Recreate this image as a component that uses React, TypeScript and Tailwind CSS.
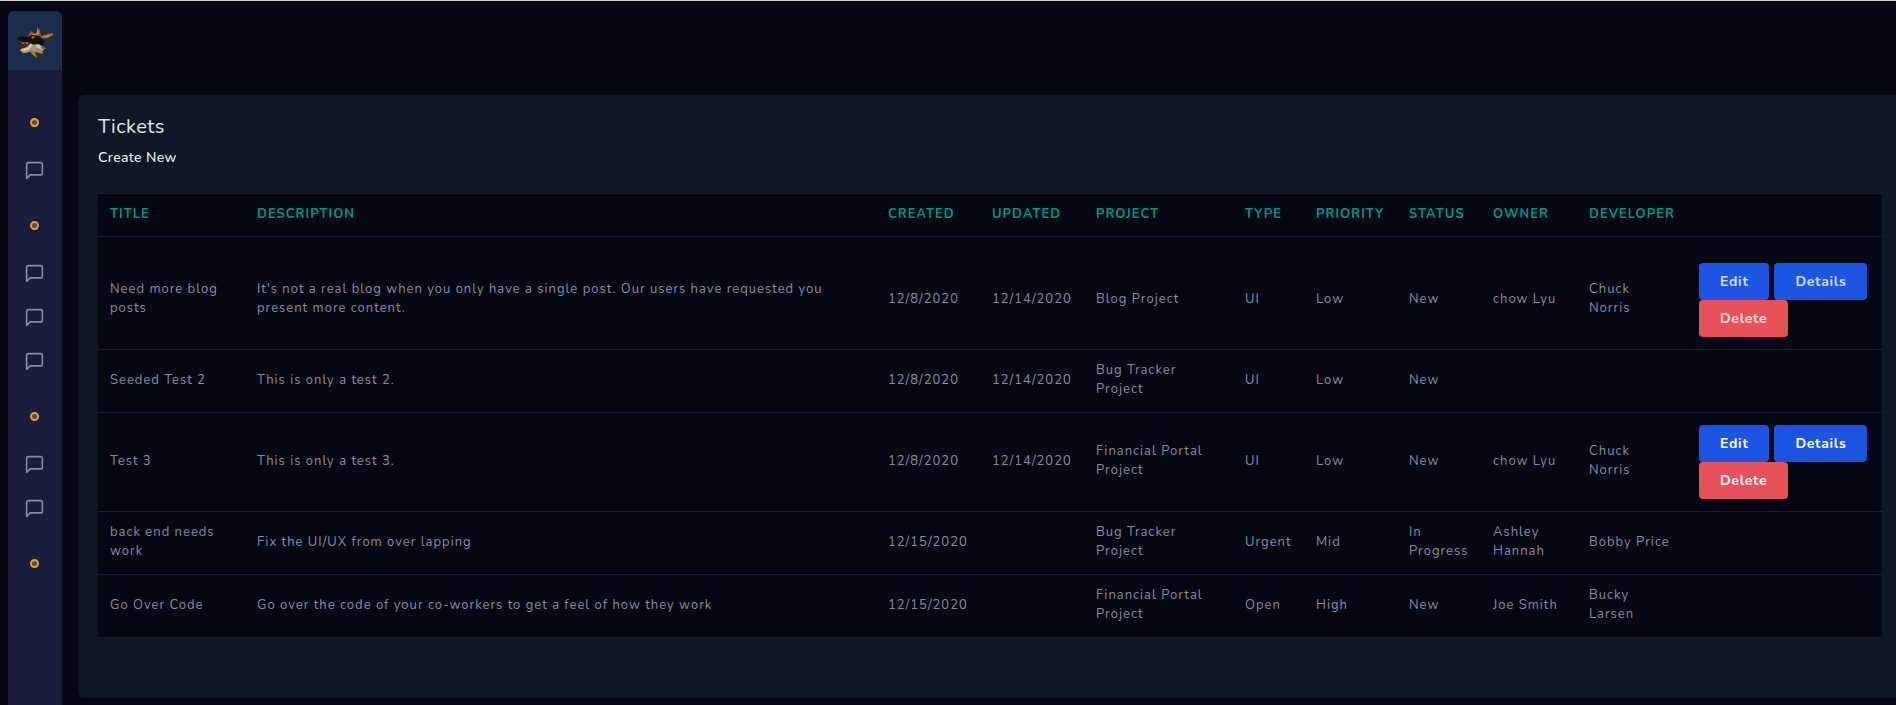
import React from "react";

type Ticket = {
  title: string;
  description: string;
  created: string;
  updated?: string;
  project: string;
  type: string;
  priority: string;
  status: string;
  owner?: string;
  developer?: string;
  actions?: "recent" | "normal";
};

const columns = [
  { label: "Title", width: "w-[147px]" },
  { label: "Description", width: "" },
  { label: "Created", width: "w-[104px]" },
  { label: "Updated", width: "w-[104px]" },
  { label: "Project", width: "w-[149px]" },
  { label: "Type", width: "w-[71px]" },
  { label: "Priority", width: "w-[93px]" },
  { label: "Status", width: "w-[84px]" },
  { label: "Owner", width: "w-[96px]" },
  { label: "Developer", width: "w-[110px]" },
];

const tickets: Ticket[] = [
  {
    title: "Need more blog posts",
    description:
      "It's not a real blog when you only have a single post. Our users have requested you present more content.",
    created: "12/8/2020",
    updated: "12/14/2020",
    project: "Blog Project",
    type: "UI",
    priority: "Low",
    status: "New",
    owner: "chow Lyu",
    developer: "Chuck Norris",
    actions: "recent",
  },
  {
    title: "Seeded Test 2",
    description: "This is only a test 2.",
    created: "12/8/2020",
    updated: "12/14/2020",
    project: "Bug Tracker Project",
    type: "UI",
    priority: "Low",
    status: "New",
  },
  {
    title: "Test 3",
    description: "This is only a test 3.",
    created: "12/8/2020",
    updated: "12/14/2020",
    project: "Financial Portal Project",
    type: "UI",
    priority: "Low",
    status: "New",
    owner: "chow Lyu",
    developer: "Chuck Norris",
    actions: "normal",
  },
  {
    title: "back end needs work",
    description: "Fix the UI/UX from over lapping",
    created: "12/15/2020",
    project: "Bug Tracker Project",
    type: "Urgent",
    priority: "Mid",
    status: "In Progress",
    owner: "Ashley Hannah",
    developer: "Bobby Price",
  },
  {
    title: "Go Over Code",
    description: "Go over the code of your co-workers to get a feel of how they work",
    created: "12/15/2020",
    project: "Financial Portal Project",
    type: "Open",
    priority: "High",
    status: "New",
    owner: "Joe Smith",
    developer: "Bucky Larsen",
  },
];

const menu: ("dot" | "chat")[] = [
  "dot",
  "chat",
  "dot",
  "chat",
  "chat",
  "chat",
  "dot",
  "chat",
  "chat",
  "dot",
];

function Logo() {
  return (
    <svg width="36" height="33" viewBox="0 0 36 33" aria-hidden="true">
      <path d="M11 10 L14 5 L17 7 L20 7 L20 1 L23 4 L24 10 L17 12 Z" fill="#9a5a18" />
      <path d="M15 8 L19 8 L21 3 L22 8 L17 10 Z" fill="#cf8d34" />
      <path d="M22 11 L27 9 L36 7 L36 9 L31 12 L25 13 Z" fill="#a9691c" />
      <path d="M26 11 L35 8 L30 11 Z" fill="#cf9440" />
      <path d="M2 14 L6 16 L14 16 L14 19 L7 19 L3 17 Z" fill="#6f2433" />
      <path d="M15 19 L22 18 L26 20 L27 24 L23 27 L18 26 L12 26 L9 27 L5 27 L7 24 L12 23 Z" fill="#98968f" />
      <path d="M3 25 L4 23 L10 21 L14 17 L16 19 L12 24 L6 26 Z" fill="#e3b058" />
      <path d="M7 24 L12 22 L14 19" stroke="#f3dfa8" strokeWidth="1" fill="none" />
      <path d="M18 19 L23 19 L25 23 L20 22 Z" fill="#c5c3bb" />
      <path d="M0 12 L4 10 L10 11 L15 9 L22 10 L26 13 L27 18 L25 20 L22 18 L18 17 L15 18 L11 16 L6 16 L1 14 Z" fill="#11100e" />
      <path d="M14 11 L18 10 L16 13 Z" fill="#c58a28" />
      <path d="M13 24 L18 26 L20 32 L17 30 L14 27 Z" fill="#b97422" />
      <path d="M19 22 L26 26 L25 28 L20 26 Z" fill="#c58331" />
      <path d="M25 20 L30 23 L27 23 L24 22 Z" fill="#9b5c1d" />
      <path d="M5 16 L6 18 L7 16 M9 16 L10 18 L11 16" stroke="#b8958a" strokeWidth="0.5" fill="none" />
    </svg>
  );
}

function ChatIcon() {
  return (
    <svg
      width="21"
      height="21"
      viewBox="0 0 24 24"
      fill="none"
      stroke="#888ea8"
      strokeWidth="1.8"
      strokeLinecap="round"
      strokeLinejoin="round"
      aria-hidden="true"
    >
      <path d="M21 15a2 2 0 0 1-2 2H7l-4 4V5a2 2 0 0 1 2-2h14a2 2 0 0 1 2 2z" />
    </svg>
  );
}

function Sidebar() {
  return (
    <nav aria-label="Main" className="flex w-[54px] shrink-0 flex-col rounded-t-md bg-[#1a1e3a]">
      <a
        href="#"
        aria-label="Home"
        className="flex h-[59px] items-center justify-center rounded-t-md bg-[#1b2e4b] pt-1"
      >
        <Logo />
      </a>
      <ul className="pt-[19px] pr-px">
        {menu.map((kind, i) =>
          kind === "dot" ? (
            <li key={i} className="flex h-[59px] justify-center pt-[29px]">
              <span className="size-[9px] rounded-full border-2 border-[#e2a03f] bg-[#5a4a42]" />
            </li>
          ) : (
            <li key={i}>
              <a href="#" aria-label="Messages" className="flex h-11 items-center justify-center">
                <ChatIcon />
              </a>
            </li>
          ),
        )}
      </ul>
    </nav>
  );
}

const buttonBase = "h-[37px] rounded px-[21px] text-sm font-bold tracking-wider";

function Actions({ recent }: { recent: boolean }) {
  return (
    <div className={recent ? "text-white/80" : "text-white"}>
      <div className="flex gap-[5px]">
        <button type="button" className={`${buttonBase} bg-[#1b55e2]`}>
          Edit
        </button>
        <button type="button" className={`${buttonBase} bg-[#1b55e2]`}>
          Details
        </button>
      </div>
      <button type="button" className={`${buttonBase} block bg-[#e7515a]`}>
        Delete
      </button>
    </div>
  );
}

export default function App() {
  return (
    <div className="min-h-screen overflow-x-hidden border-t border-[#d3d7d5] bg-[#060714] font-['Nunito','Noto_Sans',sans-serif]">
      <div className="flex min-h-[calc(100vh-1px)] gap-4 pt-[10px] pl-2">
        <Sidebar />
        <main className="min-w-0 grow pt-[84px] pb-[7px]">
          <section className="h-full rounded-l-md bg-[#0e1726] pt-[18px] pr-[14px] pb-[60px] pl-5">
            <h1 className="text-xl leading-7 tracking-wide text-[#e0e6ed]">Tickets</h1>
            <a href="#" className="mt-[5px] block text-sm leading-6 font-medium tracking-wide text-[#f1f2f3]">
              Create New
            </a>
            <table className="mt-[23px] w-full table-fixed border-collapse bg-[#060714] text-left tracking-[1px]">
              <thead>
                <tr className="h-[43px] border-y border-[#191e3a]">
                  {columns.map((c) => (
                    <th
                      key={c.label}
                      scope="col"
                      className={`${c.width} px-3 text-[13px] font-bold text-[#009688] uppercase`}
                    >
                      {c.label}
                    </th>
                  ))}
                  <th scope="col" aria-label="Actions" className="w-[195px]" />
                </tr>
              </thead>
              <tbody className="text-[13px] leading-[19px] text-[#888ea8]">
                {tickets.map((t) => {
                  const recent = t.actions === "recent";
                  return (
                    <tr key={t.title} className="border-b border-[#191e3a]">
                      {[
                        t.title,
                        t.description,
                        t.created,
                        t.updated,
                        t.project,
                        t.type,
                        t.priority,
                        t.status,
                        t.owner,
                        t.developer,
                      ].map((value, i) => (
                        <td key={i} className={`px-3 pb-[13px] align-middle ${recent ? "pt-[25px]" : "pt-[11px]"}`}>
                          {value}
                        </td>
                      ))}
                      <td className={`px-3 pb-3 ${recent ? "pt-[26px]" : "pt-3"}`}>
                        {t.actions && <Actions recent={recent} />}
                      </td>
                    </tr>
                  );
                })}
              </tbody>
            </table>
          </section>
        </main>
      </div>
    </div>
  );
}
